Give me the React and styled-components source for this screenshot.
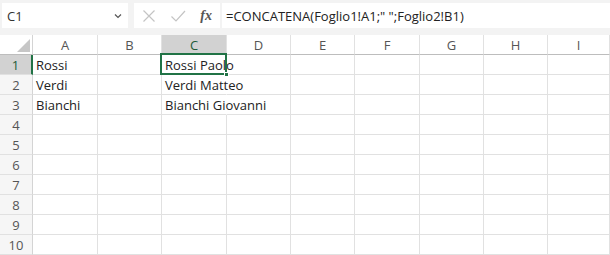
import React from "react";
import styled, { createGlobalStyle } from "styled-components";

const GlobalStyle = createGlobalStyle`
  html, body { margin: 0; padding: 0; background: #ffffff; }
  body { font-family: "Open Sans", "Noto Sans", sans-serif; color: #222; overflow: hidden; }
  * { box-sizing: border-box; }
`;

const Page = styled.div`
  width: 610px;
  height: 255px;
  overflow: hidden;
  display: flex;
  flex-direction: column;
`;

const TopBar = styled.div`
  height: 35px;
  flex: none;
  background: #f3f3f3;
  display: flex;
  align-items: flex-start;
  padding: 3px 0 0 2px;
`;

const Box = styled.div`
  height: 25px;
  background: #ffffff;
  display: flex;
  align-items: center;
`;

const NameBox = styled(Box)`
  width: 126px;
  margin-right: 6px;
  padding: 0 6px 0 5px;
  justify-content: space-between;
  font-size: 13px;
  color: #333;
`;

const FxBox = styled(Box)`
  width: 86px;
  margin-right: 2px;
  padding: 0 6px 0 8px;
  justify-content: space-between;
`;

const FormulaBox = styled(Box)`
  flex: 1;
  padding-left: 4px;
  font-size: 13px;
  color: #222;
  white-space: nowrap;
`;

const Fx = styled.span`
  font-family: "Liberation Serif", serif;
  font-style: italic;
  font-weight: bold;
  font-size: 14px;
  color: #555;
  margin-right: 2px;
`;

const Sheet = styled.div`
  display: grid;
  grid-template-columns: 33px 65px 64px 65px 64px 64px 65px 64px 64px 62px;
  grid-auto-rows: 20px;
  background: #ffffff;
`;

const Corner = styled.div`
  background: #ffffff;
  border-right: 1px solid #d4d4d4;
  border-bottom: 1px solid #bdbdbd;
  display: flex;
  align-items: flex-end;
  justify-content: flex-end;
  padding: 0 2px 2px 0;
`;

const ColHead = styled.div`
  background: ${(p) => (p.$active ? "#d2d2d2" : "#ffffff")};
  border-right: 1px solid #e1e1e1;
  border-bottom: ${(p) => (p.$active ? "2px solid #217346" : "1px solid #bdbdbd")};
  display: flex;
  align-items: center;
  justify-content: center;
  font-size: 13px;
  color: ${(p) => (p.$active ? "#1f5c38" : "#555")};
  padding-top: ${(p) => (p.$active ? "1px" : "0")};
`;

const RowHead = styled.div`
  background: ${(p) => (p.$active ? "#d2d2d2" : "#f6f6f6")};
  border-right: ${(p) => (p.$active ? "2px solid #217346" : "1px solid #d4d4d4")};
  border-bottom: 1px solid #e1e1e1;
  display: flex;
  align-items: center;
  justify-content: center;
  font-size: 13px;
  color: ${(p) => (p.$active ? "#1f5c38" : "#555")};
`;

const Cell = styled.div`
  position: relative;
  border-bottom: 1px solid #e1e1e1;
  border-right: ${(p) => (p.$spill ? "1px solid transparent" : "1px solid #e1e1e1")};
  font-size: 13px;
  color: #222;
  padding-left: 3px;
  white-space: nowrap;
  display: flex;
  align-items: center;
  overflow: visible;
  z-index: ${(p) => (p.$spill ? 2 : 1)};
`;

const Selection = styled.div`
  position: absolute;
  left: -2px;
  top: -2px;
  right: -1px;
  bottom: -1px;
  border: 2px solid #217346;
  pointer-events: none;
  z-index: 3;
`;

const Handle = styled.div`
  position: absolute;
  right: -4px;
  bottom: -4px;
  width: 5px;
  height: 5px;
  background: #217346;
  border: 1px solid #ffffff;
`;

const cols = ["A", "B", "C", "D", "E", "F", "G", "H", "I"];
const data = {
  1: { A: "Rossi", C: "Rossi Paolo" },
  2: { A: "Verdi", C: "Verdi Matteo" },
  3: { A: "Bianchi", C: "Bianchi Giovanni" },
};

const XIcon = () => (
  <svg width="14" height="14" viewBox="0 0 14 14">
    <path d="M1.5 1.5 L12.5 12.5 M12.5 1.5 L1.5 12.5" stroke="#c4c4c4" strokeWidth="1.2" fill="none" />
  </svg>
);
const CheckIcon = () => (
  <svg width="16" height="14" viewBox="0 0 16 14">
    <path d="M1.5 7.5 L6 12 L15 2" stroke="#c4c4c4" strokeWidth="1.2" fill="none" />
  </svg>
);
const Chevron = () => (
  <svg width="8" height="6" viewBox="0 0 8 6">
    <path d="M1 1.5 L4 4.5 L7 1.5" stroke="#555" strokeWidth="1.2" fill="none" />
  </svg>
);

export default function App() {
  const rows = Array.from({ length: 10 }, (_, i) => i + 1);
  return (
    <Page>
      <GlobalStyle />
      <TopBar>
        <NameBox>
          <span>C1</span>
          <Chevron />
        </NameBox>
        <FxBox>
          <XIcon />
          <CheckIcon />
          <Fx>fx</Fx>
        </FxBox>
        <FormulaBox>=CONCATENA(Foglio1!A1;" ";Foglio2!B1)</FormulaBox>
      </TopBar>
      <Sheet>
        <Corner>
          <svg width="13" height="13" viewBox="0 0 13 13">
            <path d="M13 0 L13 13 L0 13 Z" fill="#c6c6c6" />
          </svg>
        </Corner>
        {cols.map((c) => (
          <ColHead key={c} $active={c === "C"}>{c}</ColHead>
        ))}
        {rows.map((r) => (
          <React.Fragment key={r}>
            <RowHead $active={r === 1}>{r}</RowHead>
            {cols.map((c) => {
              const v = data[r] && data[r][c];
              return (
                <Cell key={c} $spill={c === "C" && !!v}>
                  {v}
                  {r === 1 && c === "C" && (
                    <Selection>
                      <Handle />
                    </Selection>
                  )}
                </Cell>
              );
            })}
          </React.Fragment>
        ))}
      </Sheet>
    </Page>
  );
}
